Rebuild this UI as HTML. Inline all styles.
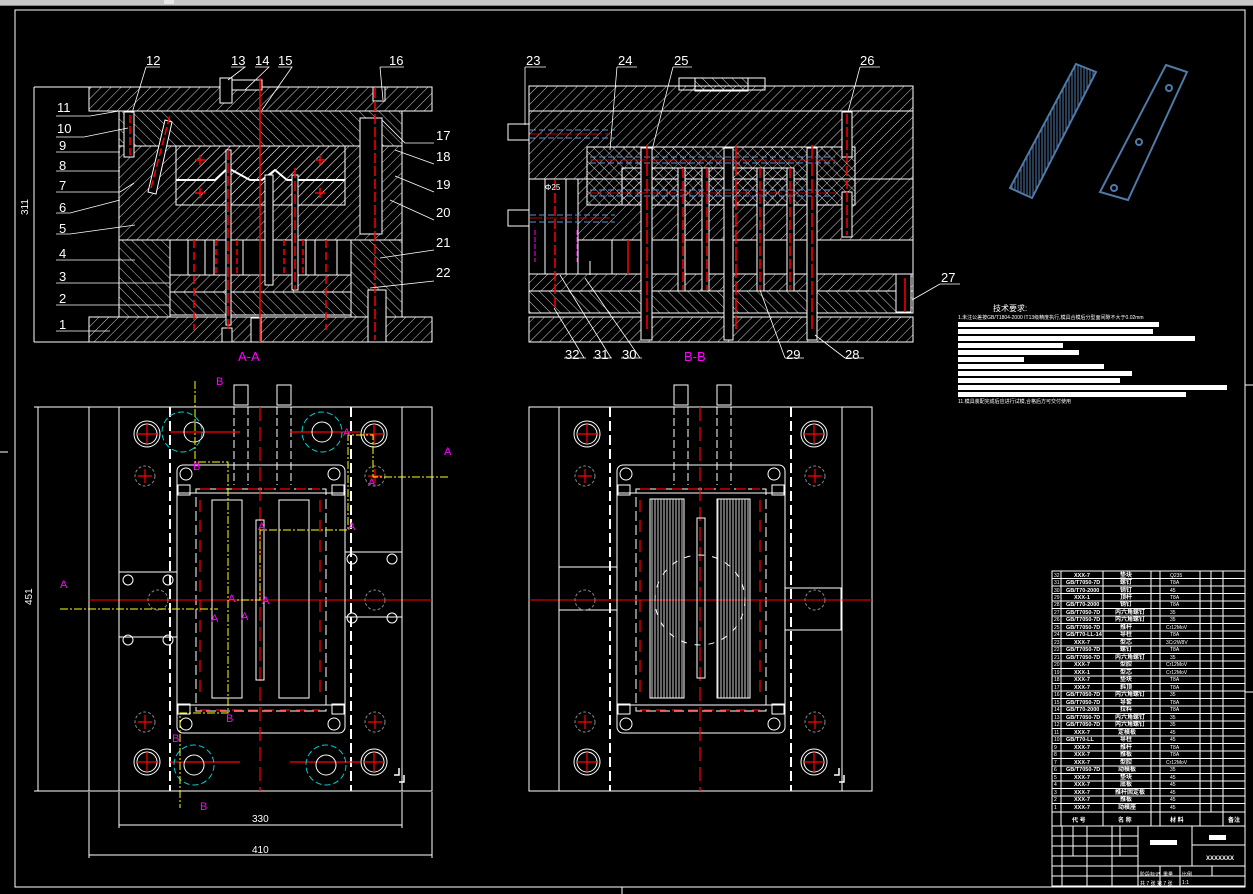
<!DOCTYPE html>
<html><head><meta charset="utf-8"><style>
html,body{margin:0;padding:0;background:#000;width:1253px;height:894px;overflow:hidden}
svg{display:block}
text{font-family:"Liberation Sans","Noto Sans CJK SC",sans-serif}
</style></head><body>
<svg width="1253" height="894" viewBox="0 0 1253 894" xmlns="http://www.w3.org/2000/svg">
<defs>
<pattern id="h1" width="7" height="7" patternUnits="userSpaceOnUse" patternTransform="rotate(45)"><line x1="0" y1="0" x2="0" y2="7" stroke="#fff" stroke-width="0.8"/></pattern>
<pattern id="h2" width="7" height="7" patternUnits="userSpaceOnUse" patternTransform="rotate(-45)"><line x1="0" y1="0" x2="0" y2="7" stroke="#fff" stroke-width="0.8"/></pattern>
<pattern id="vs" width="3" height="3" patternUnits="userSpaceOnUse"><line x1="1" y1="0" x2="1" y2="3" stroke="#fff" stroke-width="0.8"/></pattern>
<pattern id="vb" width="3" height="3" patternUnits="userSpaceOnUse"><line x1="1" y1="0" x2="1" y2="3" stroke="#4f79a8" stroke-width="1"/></pattern>
</defs>
<rect width="1253" height="894" fill="#000"/>
<rect x="0" y="0" width="1253" height="5" fill="#c8c8c8"/>
<rect x="0" y="5" width="1253" height="1" fill="#888"/>
<rect x="164" y="0" width="10" height="4" fill="#e8e8e8"/>
<rect x="15" y="10" width="1230" height="877" fill="none" stroke="#fff" stroke-width="1"/>
<g stroke="#fff" stroke-width="1"><line x1="622" y1="887" x2="622" y2="894"/><line x1="0" y1="452" x2="8" y2="452"/><line x1="1245" y1="692" x2="1253" y2="692"/><line x1="1245" y1="385" x2="1253" y2="385"/></g>

<!-- ============ A-A section ============ -->
<g stroke="#fff" stroke-width="1" fill="none">
<rect x="89" y="87" width="343" height="24" fill="url(#h1)"/>
<rect x="89" y="317" width="343" height="25" fill="url(#h1)"/>
<rect x="119" y="111" width="283" height="35" fill="url(#h2)"/>
<rect x="119" y="146" width="283" height="94" fill="url(#h1)"/>
<rect x="176" y="146" width="169" height="59" fill="url(#h1)"/>
<rect x="119" y="240" width="51" height="77" fill="url(#h2)"/>
<rect x="351" y="240" width="51" height="77" fill="url(#h2)"/>
<rect x="170" y="240" width="181" height="35" fill="#000"/>
<rect x="170" y="275" width="181" height="17" fill="url(#h1)"/>
<rect x="170" y="292" width="181" height="23" fill="url(#h2)"/>
<rect x="360" y="118" width="22" height="116" fill="#000"/>
<path d="M176 180 L215 180 L228 168 L250 180 L262 180 L275 170 L287 180 L345 180" stroke-width="2"/>
<path d="M148 192 L165 120 L172 122 L156 194 Z" fill="#000"/>
<rect x="226" y="80" width="36" height="10" fill="#000"/>
<rect x="220" y="78" width="12" height="25" fill="#000"/>
<rect x="265" y="175" width="8" height="110" fill="#000"/>
<rect x="226" y="150" width="5" height="175" fill="#000"/>
<rect x="292" y="175" width="6" height="115" fill="#000"/>
<rect x="124" y="112" width="10" height="45" fill="#000"/>
<rect x="373" y="87" width="12" height="14" fill="#000"/>
<rect x="368" y="290" width="18" height="52" fill="#000"/>
<rect x="222" y="328" width="10" height="14" fill="#000"/>
<rect x="251" y="318" width="10" height="24" fill="#000"/>
<line x1="188" y1="240" x2="188" y2="275"/><line x1="205" y1="240" x2="205" y2="275"/><line x1="214" y1="240" x2="214" y2="275"/><line x1="243" y1="240" x2="243" y2="275"/><line x1="306" y1="240" x2="306" y2="275"/><line x1="315" y1="240" x2="315" y2="275"/><line x1="337" y1="240" x2="337" y2="275"/>
</g>
<g stroke="#f00" stroke-width="1.5" fill="none">
<line x1="260" y1="78" x2="260" y2="342"/>
<line x1="228" y1="150" x2="228" y2="330" stroke-dasharray="10,3"/>
<line x1="295" y1="168" x2="295" y2="290" stroke-dasharray="10,3"/>
<line x1="375" y1="88" x2="375" y2="340" stroke-dasharray="10,3"/>
<line x1="130" y1="115" x2="130" y2="155" stroke-dasharray="8,3"/>
<line x1="151" y1="188" x2="170" y2="115" stroke-dasharray="8,3"/>
<line x1="194" y1="240" x2="194" y2="330" stroke-dasharray="8,4"/>
<line x1="216" y1="240" x2="216" y2="275" stroke-dasharray="6,3"/>
<line x1="237" y1="240" x2="237" y2="275" stroke-dasharray="6,3"/>
<line x1="284" y1="240" x2="284" y2="275" stroke-dasharray="6,3"/>
<line x1="303" y1="240" x2="303" y2="275" stroke-dasharray="6,3"/>
<line x1="326" y1="240" x2="326" y2="330" stroke-dasharray="8,4"/>
<path d="M195 160h10M200 155v10M195 193h10M200 188v10M315 160h10M320 155v10M315 193h10M320 188v10"/>
</g>
<g stroke="#fff" stroke-width="1" fill="none">
<line x1="34" y1="87" x2="89" y2="87"/><line x1="34" y1="342" x2="89" y2="342"/><line x1="34" y1="87" x2="34" y2="342"/>
</g>
<text x="28" y="215" fill="#fff" font-size="10" transform="rotate(-90 28 215)">311</text>
<g fill="#fff" font-size="13">
<text x="57" y="112">11</text><text x="57" y="133">10</text><text x="59" y="150">9</text><text x="59" y="170">8</text><text x="59" y="190">7</text><text x="59" y="212">6</text><text x="59" y="233">5</text><text x="59" y="258">4</text><text x="59" y="281">3</text><text x="59" y="303">2</text><text x="59" y="329">1</text>
<text x="146" y="65">12</text><text x="231" y="65">13</text><text x="255" y="65">14</text><text x="278" y="65">15</text><text x="389" y="65">16</text>
<text x="436" y="140">17</text><text x="436" y="161">18</text><text x="436" y="189">19</text><text x="436" y="217">20</text><text x="436" y="247">21</text><text x="436" y="277">22</text>
</g>
<g stroke="#fff" stroke-width="0.8" fill="none">
<path d="M146 67H160 M146 67L132 113 M231 67H245L228 80 M255 67H269L245 90 M278 67H292L262 110"/>
<path d="M56 116H90L119 111 M56 137H84L128 128 M56 152H120 M56 171H120 M56 192H120L134 183 M56 213H70L120 200 M56 234H70L135 225 M56 260H135 M56 283H170 M56 305H170 M56 331H110"/>
<path d="M380 67H404 M380 67L383 100 M434 143H405L382 120 M434 164L395 150 M434 192L395 176 M434 220L390 200 M434 250L380 258 M434 281L370 288"/>
</g>
<text x="238" y="361" fill="#f0f" font-size="13">A-A</text>

<!-- ============ B-B section ============ -->
<g stroke="#fff" stroke-width="1" fill="none">
<rect x="679" y="78" width="86" height="12" fill="#000"/>
<rect x="695" y="78" width="53" height="13" fill="url(#h2)"/>
<rect x="529" y="86" width="384" height="25" fill="url(#h1)"/>
<rect x="529" y="111" width="384" height="68" fill="url(#h1)"/>
<rect x="529" y="179" width="384" height="61" fill="url(#h1)"/>
<rect x="587" y="147" width="268" height="58" fill="url(#h2)"/>
<rect x="622" y="168" width="170" height="37" fill="url(#h1)"/>
<rect x="578" y="240" width="335" height="34" fill="#000"/>
<rect x="529" y="179" width="49" height="95" fill="#000"/>
<rect x="545" y="179" width="21" height="95" fill="#000"/>
<rect x="529" y="274" width="384" height="17" fill="url(#h1)"/>
<rect x="529" y="291" width="384" height="22" fill="url(#h2)"/>
<rect x="529" y="317" width="384" height="25" fill="url(#h1)"/>
<line x1="529" y1="313" x2="913" y2="313"/>
<rect x="508" y="124" width="21" height="16" fill="#000"/><rect x="508" y="210" width="21" height="16" fill="#000"/>
<rect x="641" y="148" width="11" height="192" fill="#000"/><rect x="724" y="148" width="9" height="192" fill="#000"/><rect x="807" y="148" width="10" height="192" fill="#000"/>
<rect x="678" y="168" width="7" height="123" fill="#000"/><rect x="702" y="168" width="7" height="123" fill="#000"/><rect x="757" y="168" width="7" height="123" fill="#000"/><rect x="787" y="168" width="7" height="123" fill="#000"/>
<rect x="842" y="112" width="10" height="45" fill="#000"/><rect x="842" y="192" width="10" height="45" fill="#000"/>
<rect x="896" y="274" width="15" height="38" fill="#000"/>
<line x1="590" y1="261" x2="590" y2="275"/><line x1="612" y1="240" x2="612" y2="274"/>
</g>
<g stroke="#5a8fd0" stroke-width="1" fill="none" stroke-dasharray="6,3">
<path d="M530 130H615 M530 138H615 M590 157H835 M590 163H835 M590 190H835 M590 196H835 M530 215H615 M530 222H615"/>
</g>
<g stroke="#f0f" stroke-width="1" fill="none" stroke-dasharray="5,2"><line x1="535" y1="230" x2="535" y2="262"/><line x1="577" y1="230" x2="577" y2="262"/></g>
<g stroke="#f00" stroke-width="1.5" fill="none">
<line x1="647" y1="145" x2="647" y2="332" stroke-dasharray="14,3"/>
<line x1="736" y1="145" x2="736" y2="332" stroke-dasharray="14,3"/>
<line x1="812" y1="145" x2="812" y2="332" stroke-dasharray="14,3"/>
<line x1="683" y1="168" x2="683" y2="290" stroke-dasharray="10,3"/>
<line x1="707" y1="168" x2="707" y2="290" stroke-dasharray="10,3"/>
<line x1="760" y1="168" x2="760" y2="290" stroke-dasharray="10,3"/>
<line x1="790" y1="168" x2="790" y2="290" stroke-dasharray="10,3"/>
<line x1="847" y1="114" x2="847" y2="235" stroke-dasharray="10,3"/>
<line x1="555" y1="180" x2="555" y2="310" stroke-dasharray="10,3"/>
<line x1="628" y1="240" x2="628" y2="274"/>
<line x1="905" y1="278" x2="905" y2="312"/>
<path d="M590 160H835 M590 193H835 M530 134H610 M530 218H610" stroke-width="0.8" stroke-dasharray="12,3"/>
</g>
<text x="545" y="190" fill="#fff" font-size="8">Φ25</text>
<g fill="#fff" font-size="13">
<text x="526" y="65">23</text><text x="618" y="65">24</text><text x="674" y="65">25</text><text x="860" y="65">26</text><text x="941" y="282">27</text>
<text x="565" y="359">32</text><text x="594" y="359">31</text><text x="622" y="359">30</text><text x="786" y="359">29</text><text x="845" y="359">28</text>
</g>
<g stroke="#fff" stroke-width="0.8" fill="none">
<path d="M525 67V125 M525 67H546 M617 67L610 150 M617 67H637 M673 67L652 150 M673 67H692 M860 67L848 112 M860 67H880 M940 284L912 300 M940 284H960"/>
<path d="M584 358L554 308 M564 358H586 M611 358L560 275 M593 358H612 M640 358L585 278 M621 358H642 M785 358L760 290 M785 358H804 M845 358L815 335 M845 358H864"/>
</g>
<text x="684" y="361" fill="#f0f" font-size="13">B-B</text>

<!-- ============ plan views (common) ============ -->
<g id="plan" stroke="#fff" stroke-width="1" fill="none">
<rect x="89" y="407" width="343" height="384"/>
<line x1="119" y1="407" x2="119" y2="791"/><line x1="402" y1="407" x2="402" y2="791"/>
<rect x="177" y="465" width="168" height="268" rx="6"/>
<line x1="177" y1="493" x2="345" y2="493"/><line x1="177" y1="705" x2="345" y2="705"/>
<line x1="170" y1="407" x2="170" y2="791" stroke-dasharray="10,4" stroke-width="2"/>
<line x1="351" y1="407" x2="351" y2="791" stroke-dasharray="10,4" stroke-width="2"/>
<rect x="196" y="489" width="130" height="222" stroke-dasharray="10,4"/>
<rect x="234" y="385" width="14" height="20"/><rect x="277" y="385" width="14" height="20"/>
<line x1="234" y1="407" x2="234" y2="485" stroke-dasharray="8,3"/><line x1="248" y1="407" x2="248" y2="485" stroke-dasharray="8,3"/>
<line x1="277" y1="407" x2="277" y2="485" stroke-dasharray="8,3"/><line x1="291" y1="407" x2="291" y2="485" stroke-dasharray="8,3"/>
<line x1="89" y1="600" x2="432" y2="600" stroke="#f00"/>
<circle cx="147" cy="434" r="13"/><circle cx="147" cy="434" r="10"/>
<circle cx="147" cy="762" r="13"/><circle cx="147" cy="762" r="10"/>
<circle cx="374" cy="434" r="13"/><circle cx="374" cy="434" r="10"/>
<circle cx="374" cy="762" r="13"/><circle cx="374" cy="762" r="10"/>
<circle cx="145" cy="476" r="10" stroke="#888" stroke-dasharray="3,2"/><circle cx="145" cy="722" r="10" stroke="#888" stroke-dasharray="3,2"/>
<circle cx="375" cy="476" r="10" stroke="#888" stroke-dasharray="3,2"/><circle cx="375" cy="722" r="10" stroke="#888" stroke-dasharray="3,2"/>
<circle cx="186" cy="474" r="6"/><circle cx="334" cy="474" r="6"/><circle cx="186" cy="724" r="6"/><circle cx="334" cy="724" r="6"/>
<rect x="178" y="485" width="12" height="10"/><rect x="332" y="485" width="12" height="10"/><rect x="178" y="704" width="12" height="10"/><rect x="332" y="704" width="12" height="10"/>
<path d="M394 775h5v-7 M399 782h5v-7" stroke-width="1.5"/>
</g>
<use href="#plan" x="440" y="0"/>
<g stroke="#f00" stroke-width="1.2" fill="none">
<path d="M137 434h20M147 424v20M364 434h20M374 424v20M137 762h20M147 752v20M364 762h20M374 752v20"/>
<path d="M577 434h20M587 424v20M804 434h20M814 424v20M577 762h20M587 752v20M804 762h20M814 752v20"/>
<path d="M138 476h14M145 469v14M368 476h14M375 469v14M138 722h14M145 715v14M368 722h14M375 715v14"/>
<path d="M578 476h14M585 469v14M808 476h14M815 469v14M578 722h14M585 715v14M808 722h14M815 715v14"/>
<line x1="260" y1="407" x2="260" y2="791" stroke-dasharray="14,6"/>
<line x1="700" y1="407" x2="700" y2="791" stroke-dasharray="14,6"/>
<line x1="200" y1="500" x2="200" y2="700" stroke-dasharray="12,8"/><line x1="320" y1="500" x2="320" y2="700" stroke-dasharray="12,8"/>
<line x1="640" y1="500" x2="640" y2="700" stroke-dasharray="12,8"/><line x1="760" y1="500" x2="760" y2="700" stroke-dasharray="12,8"/>
<path d="M170 432h70M290 432h70M170 762h70M290 762h70"/>
<line x1="200" y1="489" x2="320" y2="489" stroke-dasharray="10,6"/><line x1="200" y1="710" x2="320" y2="710" stroke-dasharray="10,6"/>
<line x1="640" y1="489" x2="760" y2="489" stroke-dasharray="10,6"/><line x1="640" y1="710" x2="760" y2="710" stroke-dasharray="10,6"/>
</g>
<!-- left plan specifics -->
<g stroke="#fff" stroke-width="1" fill="none">
<rect x="212" y="500" width="30" height="198"/><rect x="279" y="500" width="30" height="198"/>
<rect x="256" y="520" width="8" height="160"/>
<rect x="119" y="572" width="58" height="65"/><rect x="345" y="552" width="57" height="65"/>
<circle cx="182" cy="432" r="20" stroke="#0cc" stroke-dasharray="6,3"/><circle cx="322" cy="432" r="20" stroke="#0cc" stroke-dasharray="6,3"/>
<circle cx="194" cy="765" r="20" stroke="#0cc" stroke-dasharray="6,3"/><circle cx="326" cy="765" r="20" stroke="#0cc" stroke-dasharray="6,3"/>
<circle cx="194" cy="432" r="10"/><circle cx="322" cy="432" r="10"/><circle cx="194" cy="765" r="10"/><circle cx="326" cy="765" r="10"/>
<circle cx="128" cy="580" r="5"/><circle cx="168" cy="580" r="5"/><circle cx="128" cy="640" r="5"/><circle cx="168" cy="640" r="5"/>
<circle cx="352" cy="559" r="5"/><circle cx="392" cy="559" r="5"/><circle cx="352" cy="618" r="5"/><circle cx="392" cy="618" r="5"/>
<circle cx="158" cy="600" r="10" stroke="#888" stroke-dasharray="3,2"/><circle cx="375" cy="600" r="10" stroke="#888" stroke-dasharray="3,2"/>
</g>
<g stroke="#ff0" stroke-width="1" fill="none" stroke-dasharray="8,2,2,2">
<path d="M195 381V462H228V713H180V808 M448 477H373V435H348V530H260V600H235 M60 609H218"/>
</g>
<g fill="#f0f" font-size="11">
<text x="216" y="385">B</text><text x="200" y="810">B</text><text x="444" y="455">A</text><text x="60" y="588">A</text>
<text x="193" y="470">B</text><text x="226" y="722">B</text><text x="172" y="742">B</text><text x="348" y="530">A</text><text x="258" y="530">A</text><text x="228" y="602">A</text><text x="211" y="622">A</text><text x="241" y="620">A</text><text x="262" y="604">A</text><text x="368" y="486">A</text><text x="343" y="436">A</text>
</g>
<!-- right plan specifics -->
<g stroke="#fff" stroke-width="1" fill="none">
<rect x="650" y="499" width="34" height="199" fill="url(#vs)"/>
<rect x="717" y="499" width="33" height="199" fill="url(#vs)"/>
<rect x="697" y="518" width="8" height="160"/>
<rect x="559" y="567" width="58" height="43"/><rect x="785" y="588" width="56" height="42"/>
<circle cx="700" cy="600" r="45" stroke-dasharray="6,8"/>
<circle cx="585" cy="600" r="10" stroke="#888" stroke-dasharray="3,2"/><circle cx="815" cy="600" r="10" stroke="#888" stroke-dasharray="3,2"/>
</g>
<!-- dimensions -->
<g stroke="#fff" stroke-width="1" fill="none">
<line x1="119" y1="792" x2="119" y2="828"/><line x1="402" y1="792" x2="402" y2="828"/><line x1="119" y1="825" x2="402" y2="825"/>
<line x1="89" y1="792" x2="89" y2="858"/><line x1="432" y1="792" x2="432" y2="858"/><line x1="89" y1="855" x2="432" y2="855"/>
<line x1="34" y1="407" x2="89" y2="407"/><line x1="34" y1="791" x2="89" y2="791"/><line x1="38" y1="407" x2="38" y2="791"/>
</g>
<g fill="#fff" font-size="10"><text x="252" y="822">330</text><text x="252" y="853">410</text></g>
<text x="32" y="605" fill="#fff" font-size="10" transform="rotate(-90 32 605)">451</text>

<!-- product images -->
<g stroke="#4f79a8" stroke-width="2" fill="none">
<path d="M1076 64 L1096 72 L1032 198 L1010 188 Z" fill="url(#vb)"/>
<path d="M1166 65 L1187 72 L1128 200 L1100 192 Z"/>
<circle cx="1169" cy="88" r="3"/><circle cx="1139" cy="142" r="3"/><circle cx="1114" cy="188" r="3"/>
</g>
<text x="993" y="311" fill="#fff" font-size="8">技术要求:</text>
<text x="958" y="319" fill="#fff" font-size="5">1.未注公差按GB/T1804-2000 IT13级精度执行,模具合模后分型面间隙不大于0.02mm</text>
<g fill="#fff">
<rect x="958" y="322" width="201" height="5"/><rect x="958" y="329" width="195" height="5"/><rect x="958" y="336" width="237" height="5"/><rect x="958" y="343" width="105" height="5"/><rect x="958" y="350" width="121" height="5"/><rect x="958" y="357" width="66" height="5"/><rect x="958" y="364" width="146" height="5"/><rect x="958" y="371" width="174" height="5"/><rect x="958" y="378" width="162" height="5"/><rect x="958" y="385" width="269" height="5"/><rect x="958" y="392" width="228" height="5"/>
</g>
<text x="958" y="403" fill="#fff" font-size="5">11.模具装配完成后应进行试模,合格后方可交付使用</text>

<!-- title block / BOM -->
<g stroke="#fff" stroke-width="1" fill="none">
<rect x="1052" y="571" width="193" height="315"/>
<path d="M1061 571V826M1103 571V826M1151 571V826M1160 571V826M1200 571V826M1211 571V812M1223 571V826"/>
<path d="M1052 578.5H1245M1052 586H1245M1052 593.5H1245M1052 601H1245M1052 608.5H1245M1052 616H1245M1052 623.5H1245M1052 631H1245M1052 638.5H1245M1052 646H1245M1052 653.5H1245M1052 661H1245M1052 668.5H1245M1052 676H1245M1052 683.5H1245M1052 691H1245M1052 698.5H1245M1052 706H1245M1052 713.5H1245M1052 721H1245M1052 728.5H1245M1052 736H1245M1052 743.5H1245M1052 751H1245M1052 758.5H1245M1052 766H1245M1052 773.5H1245M1052 781H1245M1052 788.5H1245M1052 796H1245M1052 803.5H1245M1052 812H1245M1052 826H1245"/>
<path d="M1052 836H1138M1052 846H1138M1052 856H1138M1052 866H1245M1052 876H1245M1138 826V886M1192 826V866M1192 845H1245M1062 826V886M1073 826V856M1087 826V886M1112 826V886M1120 826V856M1138 866H1192M1160 866V886M1180 866V886M1212 866V876"/>
</g>
<g fill="#fff">
<rect x="1150" y="840" width="27" height="5"/><rect x="1209" y="835" width="17" height="5"/>
</g>
<g fill="#fff" font-size="5.5" font-weight="bold">
<text x="1074" y="577">XXX-7</text><text x="1066" y="584">GB/T7050-7D</text><text x="1066" y="592">GB/T70-2000</text><text x="1074" y="599">XXX-1</text><text x="1066" y="606">GB/T70-2000</text><text x="1066" y="614">GB/T7050-7D</text><text x="1066" y="621">GB/T7050-7D</text><text x="1066" y="629">GB/T7050-7D</text><text x="1066" y="636">GB/T70-LL-14</text><text x="1074" y="644">XXX-7</text><text x="1066" y="651">GB/T7050-7D</text><text x="1066" y="659">GB/T7050-7D</text><text x="1074" y="666">XXX-7</text><text x="1074" y="674">XXX-1</text><text x="1074" y="681">XXX-7</text><text x="1074" y="689">XXX-7</text><text x="1066" y="696">GB/T7050-7D</text><text x="1066" y="704">GB/T7050-7D</text><text x="1066" y="711">GB/T70-2000</text><text x="1066" y="719">GB/T7050-7D</text><text x="1066" y="726">GB/T7050-7D</text><text x="1074" y="734">XXX-7</text><text x="1066" y="741">GB/T70-LL</text><text x="1074" y="749">XXX-7</text><text x="1074" y="756">XXX-7</text><text x="1074" y="764">XXX-7</text><text x="1066" y="771">GB/T7050-7D</text><text x="1074" y="779">XXX-7</text><text x="1074" y="786">XXX-7</text><text x="1074" y="794">XXX-7</text><text x="1074" y="801">XXX-7</text><text x="1074" y="809">XXX-7</text>
</g>
<g fill="#fff" font-size="6" font-weight="bold">
<text x="1120" y="577">垫块</text><text x="1120" y="584">螺钉</text><text x="1120" y="592">销钉</text><text x="1120" y="599">顶杆</text><text x="1120" y="606">销钉</text><text x="1115" y="614">内六角螺钉</text><text x="1115" y="621">内六角螺钉</text><text x="1120" y="629">推杆</text><text x="1120" y="636">导柱</text><text x="1120" y="644">型芯</text><text x="1120" y="651">螺钉</text><text x="1115" y="659">内六角螺钉</text><text x="1120" y="666">型腔</text><text x="1120" y="674">型芯</text><text x="1120" y="681">垫块</text><text x="1120" y="689">斜顶</text><text x="1115" y="696">内六角螺钉</text><text x="1120" y="704">导套</text><text x="1120" y="711">拉料</text><text x="1115" y="719">内六角螺钉</text><text x="1115" y="726">内六角螺钉</text><text x="1118" y="734">定模板</text><text x="1120" y="741">导柱</text><text x="1120" y="749">推杆</text><text x="1120" y="756">推板</text><text x="1120" y="764">型腔</text><text x="1118" y="771">动模板</text><text x="1120" y="779">垫块</text><text x="1120" y="786">底板</text><text x="1115" y="794">推杆固定板</text><text x="1120" y="801">推板</text><text x="1118" y="809">动模座</text>
<text x="1072" y="822">代 号</text><text x="1118" y="822">名 称</text><text x="1170" y="822">材 料</text><text x="1228" y="822">备注</text>
<text x="1206" y="860">XXXXXXX</text>
</g>
<g fill="#fff" font-size="5">
<text x="1054" y="577">32</text><text x="1054" y="584">31</text><text x="1054" y="592">30</text><text x="1054" y="599">29</text><text x="1054" y="606">28</text><text x="1054" y="614">27</text><text x="1054" y="621">26</text><text x="1054" y="629">25</text><text x="1054" y="636">24</text><text x="1054" y="644">23</text><text x="1054" y="651">22</text><text x="1054" y="659">21</text><text x="1054" y="666">20</text><text x="1054" y="674">19</text><text x="1054" y="681">18</text><text x="1054" y="689">17</text><text x="1054" y="696">16</text><text x="1054" y="704">15</text><text x="1054" y="711">14</text><text x="1054" y="719">13</text><text x="1054" y="726">12</text><text x="1054" y="734">11</text><text x="1054" y="741">10</text><text x="1054" y="749">9</text><text x="1054" y="756">8</text><text x="1054" y="764">7</text><text x="1054" y="771">6</text><text x="1054" y="779">5</text><text x="1054" y="786">4</text><text x="1054" y="794">3</text><text x="1054" y="801">2</text><text x="1054" y="809">1</text>
<text x="1170" y="577">Q235</text><text x="1170" y="584">T8A</text><text x="1170" y="592">45</text><text x="1170" y="599">T8A</text><text x="1170" y="606">T8A</text><text x="1170" y="614">35</text><text x="1170" y="621">35</text><text x="1166" y="629">Cr12MoV</text><text x="1170" y="636">T8A</text><text x="1166" y="644">3Cr2W8V</text><text x="1170" y="651">T8A</text><text x="1170" y="659">35</text><text x="1166" y="666">Cr12MoV</text><text x="1166" y="674">Cr12MoV</text><text x="1170" y="681">T8A</text><text x="1170" y="689">T8A</text><text x="1170" y="696">35</text><text x="1170" y="704">T8A</text><text x="1170" y="711">T8A</text><text x="1170" y="719">35</text><text x="1170" y="726">35</text><text x="1170" y="734">45</text><text x="1170" y="741">45</text><text x="1170" y="749">T8A</text><text x="1170" y="756">T8A</text><text x="1166" y="764">Cr12MoV</text><text x="1170" y="771">35</text><text x="1170" y="779">45</text><text x="1170" y="786">45</text><text x="1170" y="794">45</text><text x="1170" y="801">45</text><text x="1170" y="809">45</text>
<text x="1140" y="876">阶段标记</text><text x="1163" y="876">重量</text><text x="1182" y="876">比例</text><text x="1182" y="884">1:1</text><text x="1140" y="885">共 7 张 第 7 张</text>
</g>
</svg>
</body></html>
